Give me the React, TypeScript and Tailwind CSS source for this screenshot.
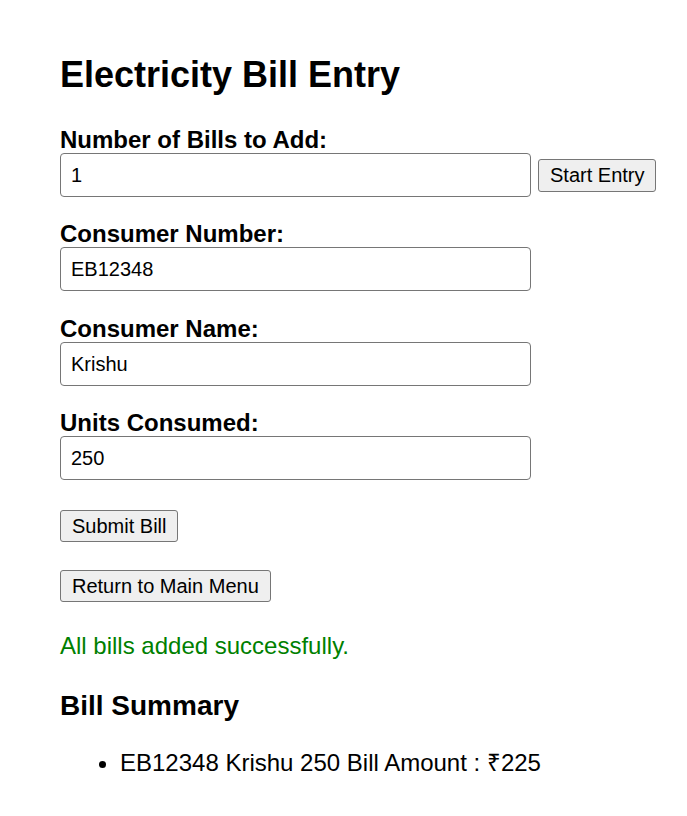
import React from "react";

const inputCls =
  "block w-[471px] h-[44px] border border-[#767676] rounded-[4px] px-[10px] text-[20px] text-black bg-white outline-none";
const btnCls =
  "h-[32px] px-[11px] border border-[#767676] rounded-[3px] bg-[#efefef] text-[20px] leading-[23px] text-black";

function Field({ label, value, mt }: { label: string; value: string; mt: string }) {
  return (
    <div className={mt}>
      <label className="block text-[24px] leading-[27px] font-bold">{label}</label>
      <input className={inputCls} defaultValue={value} />
    </div>
  );
}

export default function App() {
  return (
    <div className="min-h-[816px] bg-white text-black pl-[60px] pt-[54px] font-['Liberation_Sans',Arial,sans-serif]">
      <h2 className="text-[36px] leading-[41px] font-bold">Electricity Bill Entry</h2>
      <div className="mt-[31px]">
        <label className="block text-[24px] leading-[27px] font-bold">Number of Bills to Add:</label>
        <div className="flex items-center gap-[7px]">
          <input className={inputCls} defaultValue="1" />
          <button className={btnCls + " h-[33px]"}>Start Entry</button>
        </div>
      </div>
      <Field label="Consumer Number:" value="EB12348" mt="mt-[23px]" />
      <Field label="Consumer Name:" value="Krishu" mt="mt-[24px]" />
      <Field label="Units Consumed:" value="250" mt="mt-[23px]" />
      <div className="mt-[30px]">
        <button className={btnCls}>Submit Bill</button>
      </div>
      <div className="mt-[28px]">
        <button className={btnCls}>Return to Main Menu</button>
      </div>
      <p className="mt-[30px] text-[24px] leading-[28px] text-[#008000]">All bills added successfully.</p>
      <h3 className="mt-[30px] text-[28px] leading-[32px] font-bold">Bill Summary</h3>
      <ul className="mt-[27px] pl-[60px] list-disc text-[24px] leading-[28px]">
        <li>EB12348 Krishu 250 Bill Amount : ₹225</li>
      </ul>
    </div>
  );
}
